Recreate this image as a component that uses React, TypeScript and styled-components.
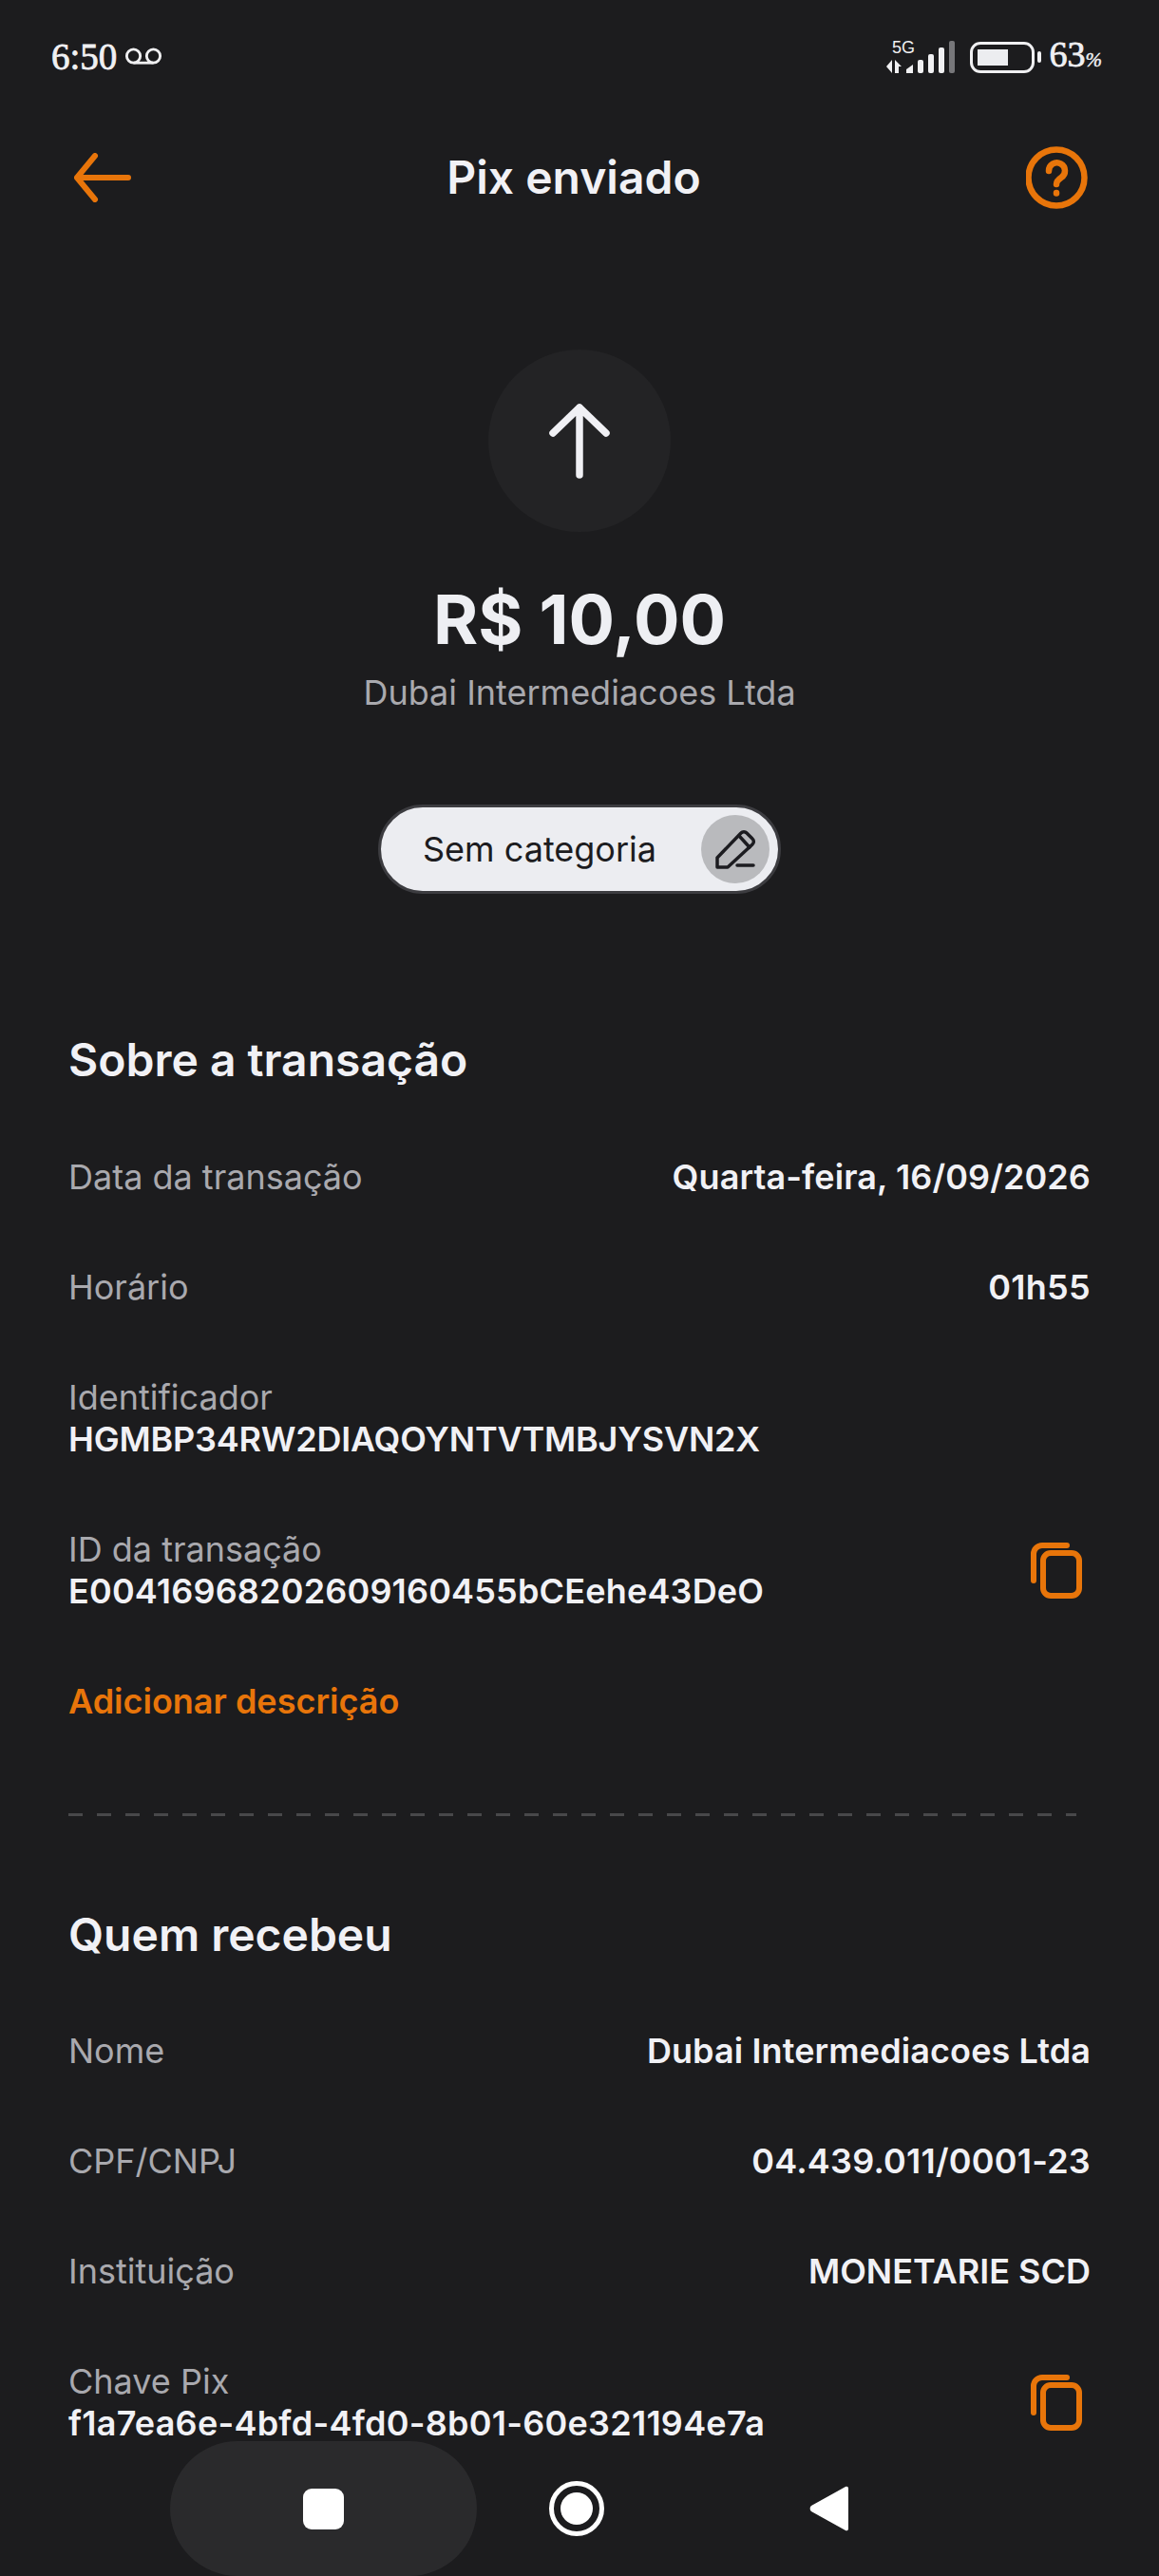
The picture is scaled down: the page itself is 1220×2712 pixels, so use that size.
import styled, { createGlobalStyle } from "styled-components";

// Row data for the two detail sections
const transactionRows = [
    { label: "Data da transação", value: "Quarta-feira, 16/09/2026", tracking: 0.1 },
    { label: "Horário", value: "01h55", tracking: 0.3 },
];

const receiverRows = [
    { label: "Nome", value: "Dubai Intermediacoes Ltda", tracking: 0.1 },
    { label: "CPF/CNPJ", value: "04.439.011/0001-23", tracking: 0.22 },
    { label: "Instituição", value: "MONETARIE SCD", tracking: 0 },
];

function CopyIcon() {
    return (
        <CopySvg viewBox="0 0 56 60" fill="none" stroke="#e8750a" strokeWidth="6" strokeLinecap="round" strokeLinejoin="round">
            <rect x="14" y="12" width="38" height="45" rx="8" />
            <path d="M4 41V13a9 9 0 0 1 9-9h26" />
        </CopySvg>
    );
}

function SignalIcon() {
    return (
        <SignalSvg viewBox="0 0 72 40">
            <FiveG x="6" y="16">5G</FiveG>
            <path d="M0 30l6-7v14zM9 23l7 7-3 0v7H9z" fill="#f0f0f2" />
            <path d="M21 37v-4l7-5v9z" fill="#f0f0f2" />
            <rect x="33" y="23" width="6" height="14" rx="2" fill="#f0f0f2" />
            <rect x="44" y="17" width="6" height="20" rx="2" fill="#f0f0f2" />
            <rect x="55" y="10" width="6" height="27" rx="2" fill="#f0f0f2" />
            <rect x="66" y="3" width="6" height="34" rx="2" fill="#77777a" />
        </SignalSvg>
    );
}

function App() {
    return (
        <Page>
            <GlobalStyle />
            <StatusBar>
                <StatusGroup>
                    <Clock>6:50</Clock>
                    <svg width="40" height="20" viewBox="0 0 42 20" fill="none" stroke="#f0f0f2" strokeWidth="3">
                        <circle cx="10" cy="9" r="7.5" />
                        <circle cx="32" cy="9" r="7.5" />
                        <path d="M10 16.5h22" />
                    </svg>
                </StatusGroup>
                <StatusGroup>
                    <SignalIcon />
                    <Battery>
                        <BatteryFill $level={63} />
                    </Battery>
                    <BatteryCap />
                    <Percent>63<small>%</small></Percent>
                </StatusGroup>
            </StatusBar>

            <Header>
                <svg width="66" height="52" viewBox="0 0 66 52" fill="none" stroke="#e8750a" strokeWidth="6" strokeLinecap="round" strokeLinejoin="round">
                    <path d="M63 26H9M28 3L9 26l19 23" />
                </svg>
                <Title>Pix enviado</Title>
                <svg width="68" height="68" viewBox="0 0 68 68" fill="none" stroke="#e8750a" strokeWidth="6.5" strokeLinecap="round" strokeLinejoin="round">
                    <circle cx="32" cy="34" r="29.5" />
                    <path d="M24 27a8.500 8.500 0 1 1 13 7c-3 2-5 3.500-5 7" />
                    <path d="M32 50v.5" />
                </svg>
            </Header>

            <Hero>
                <ArrowCircle>
                    <svg width="72" height="84" viewBox="0 0 72 84" fill="none" stroke="#f0f0f4" strokeWidth="7.5" strokeLinecap="round" strokeLinejoin="round">
                        <path d="M36 78V7M8 34L36 7l28 27" />
                    </svg>
                </ArrowCircle>
                <Amount>R$ 10,00</Amount>
                <Recipient>Dubai Intermediacoes Ltda</Recipient>
                <CategoryPill>
                    <CategoryText>Sem categoria</CategoryText>
                    <EditButton>
                        <svg width="72" height="72" viewBox="0 0 72 72" fill="none" stroke="#1c1c20" strokeWidth="3.500" strokeLinecap="round" strokeLinejoin="round">
                            <path d="M17 55V45L42 19a4 4 0 0 1 6 0l6 6a4 4 0 0 1 0 6L28 55z" />
                            <path d="M40 22l11 12M38 53h17" />
                        </svg>
                    </EditButton>
                </CategoryPill>
            </Hero>

            <Section>
                <SectionTitle>Sobre a transação</SectionTitle>
                {transactionRows.map((row) => (
                    <Row key={row.label}>
                        <Label>{row.label}</Label>
                        <Value $tracking={row.tracking}>{row.value}</Value>
                    </Row>
                ))}
                <Stack>
                    <Label>Identificador</Label>
                    <Value $tracking={-0.2}>HGMBP34RW2DIAQOYNTVTMBJYSVN2X</Value>
                </Stack>
                <Row>
                    <Stack>
                        <Label>ID da transação</Label>
                        <Value $tracking={0.18}>E00416968202609160455bCEehe43DeO</Value>
                    </Stack>
                    <CopyIcon />
                </Row>
                <AddLink>Adicionar descrição</AddLink>
            </Section>

            <Dashed />

            <Section>
                <SectionTitle>Quem recebeu</SectionTitle>
                {receiverRows.map((row) => (
                    <Row key={row.label}>
                        <Label>{row.label}</Label>
                        <Value $tracking={row.tracking}>{row.value}</Value>
                    </Row>
                ))}
                <Row>
                    <Stack>
                        <Label>Chave Pix</Label>
                        <Value $tracking={0.25}>f1a7ea6e-4bfd-4fd0-8b01-60e321194e7a</Value>
                    </Stack>
                    <CopyIcon />
                </Row>
            </Section>

            {/* Android navigation bar lies over the page content */}
            <NavBar>
                <RecentsButton>
                    <RecentsSquare />
                </RecentsButton>
                <HomeRing>
                    <HomeDot />
                </HomeRing>
                <svg width="42" height="50" viewBox="0 0 42 50">
                    <path d="M38 2a2 2 0 0 1 3 2v42a2 2 0 0 1-3 2L2 28a4 4 0 0 1 0-6z" fill="#fff" />
                </svg>
            </NavBar>
        </Page>
    );
}

const GlobalStyle = createGlobalStyle`
  html, body {
    margin: 0;
    padding: 0;
    background: #1c1c1e;
  }
`;

// Full phone screen, anything past the fold is cut off
const Page = styled.div`
  position: relative;
  width: 1220px;
  height: 2712px;
  overflow: hidden;
  background: #1c1c1e;
  font-family: Inter, "Liberation Sans", sans-serif;
  color: #f1f1f5;
`;

const StatusBar = styled.div`
  display: flex;
  justify-content: space-between;
  align-items: center;
  height: 116px;
  padding: 4px 60px 0 54px;
  box-sizing: border-box;
`;

const StatusGroup = styled.div`
  display: flex;
  align-items: center;
`;

const Clock = styled.span`
  font-family: "Liberation Serif", serif;
  font-size: 39px;
  line-height: 44px;
  color: #f0f0f2;
  margin-right: 8px;
  -webkit-text-stroke: 0.8px #f0f0f2;
`;

const SignalSvg = styled.svg`
  width: 72px;
  height: 40px;
  margin-right: 16px;
`;

const FiveG = styled.text`
  font-family: "Liberation Sans", sans-serif;
  font-size: 18px;
  fill: #f0f0f2;
`;

const Battery = styled.div`
  box-sizing: border-box;
  width: 68px;
  height: 33px;
  padding: 5px;
  border: 3px solid #f0f0f2;
  border-radius: 11px;
`;

const BatteryFill = styled.div<{ $level: number }>`
  width: ${(props) => props.$level}%;
  height: 100%;
  background: #ecedf0;
`;

const BatteryCap = styled.div`
  width: 4px;
  height: 12px;
  margin: 0 9px 0 3px;
  border-radius: 2px;
  background: #f0f0f2;
`;

const Percent = styled.span`
  font-family: "Liberation Serif", serif;
  font-size: 38px;
  line-height: 44px;
  color: #f0f0f2;
  -webkit-text-stroke: 0.8px #f0f0f2;

  small {
    font-size: 21px;
    font-style: italic;
    -webkit-text-stroke: 0.4px #f0f0f2;
  }
`;

const Header = styled.div`
  display: flex;
  justify-content: space-between;
  align-items: center;
  height: 100px;
  margin-top: 21px;
  padding: 0 72px;
`;

const Title = styled.div`
  margin-right: 10px;
  font-size: 48px;
  font-weight: 600;
  line-height: 60px;
`;

const Hero = styled.div`
  display: flex;
  flex-direction: column;
  align-items: center;
  margin-top: 131px;
`;

const ArrowCircle = styled.div`
  display: flex;
  align-items: center;
  justify-content: center;
  width: 192px;
  height: 192px;
  border-radius: 50%;
  background: #232325;
`;

const Amount = styled.div`
  margin-top: 48px;
  font-size: 72px;
  font-weight: 700;
  line-height: 88px;
  color: #eeeff3;
`;

const Recipient = styled.div`
  margin-top: 11px;
  font-size: 36px;
  line-height: 44px;
  color: #a9a9ae;
`;

const CategoryPill = styled.div`
  display: flex;
  align-items: center;
  justify-content: space-between;
  box-sizing: border-box;
  width: 424px;
  height: 94px;
  margin-top: 96px;
  padding: 0 9px 0 44px;
  border: 3px solid #3c3c40;
  border-radius: 47px;
  background: #ecedf1;
`;

const CategoryText = styled.span`
  font-size: 36px;
  line-height: 44px;
  color: #1c1c20;
`;

const EditButton = styled.div`
  width: 72px;
  height: 72px;
  border-radius: 50%;
  background: #b9babd;
`;

const Section = styled.div`
  display: flex;
  flex-direction: column;
  gap: 72px;
  margin-top: 146px;
  padding: 0 72px;

  & + div {
    margin-top: 96px;
  }
`;

const SectionTitle = styled.div`
  height: 60px;
  margin-bottom: -2.500px;
  font-size: 48px;
  font-weight: 600;
  line-height: 57px;
  color: #f1f1f5;
`;

const Row = styled.div`
  display: flex;
  align-items: center;
  justify-content: space-between;
`;

const Stack = styled.div`
  display: flex;
  flex-direction: column;
`;

const Label = styled.div`
  font-size: 36px;
  line-height: 44px;
  color: #a9a9ae;
`;

const Value = styled.div<{ $tracking?: number }>`
  font-size: 36px;
  font-weight: 600;
  line-height: 44px;
  letter-spacing: ${(props) => props.$tracking ?? 0}px;
  color: #f1f1f5;
`;

const AddLink = styled.div`
  font-size: 36px;
  font-weight: 600;
  line-height: 44px;
  color: #e8750a;
`;

const CopySvg = styled.svg`
  width: 56px;
  height: 60px;
  margin-right: 8px;
`;

const Dashed = styled.div`
  width: 1061px;
  height: 3px;
  margin: 96px 0 0 72px;
  background: repeating-linear-gradient(to right, #48484a 0 15px, transparent 15px 30px);

  & + div {
    margin-top: 96px;
  }
`;

const NavBar = styled.div`
  position: absolute;
  left: 179px;
  bottom: 0;
  display: flex;
  align-items: center;
  gap: 76px;
`;

const RecentsButton = styled.div`
  display: flex;
  align-items: center;
  justify-content: center;
  width: 323px;
  height: 142px;
  border-radius: 72px;
  background: #2a2a2c;
`;

const RecentsSquare = styled.div`
  width: 43px;
  height: 43px;
  border-radius: 9px;
  background: #fff;
`;

const HomeRing = styled.div`
  display: flex;
  align-items: center;
  justify-content: center;
  box-sizing: border-box;
  width: 58px;
  height: 58px;
  margin-right: 140px;
  border: 5px solid #fff;
  border-radius: 50%;
`;

const HomeDot = styled.div`
  width: 34px;
  height: 34px;
  border-radius: 50%;
  background: #fff;
`;

export default App;
